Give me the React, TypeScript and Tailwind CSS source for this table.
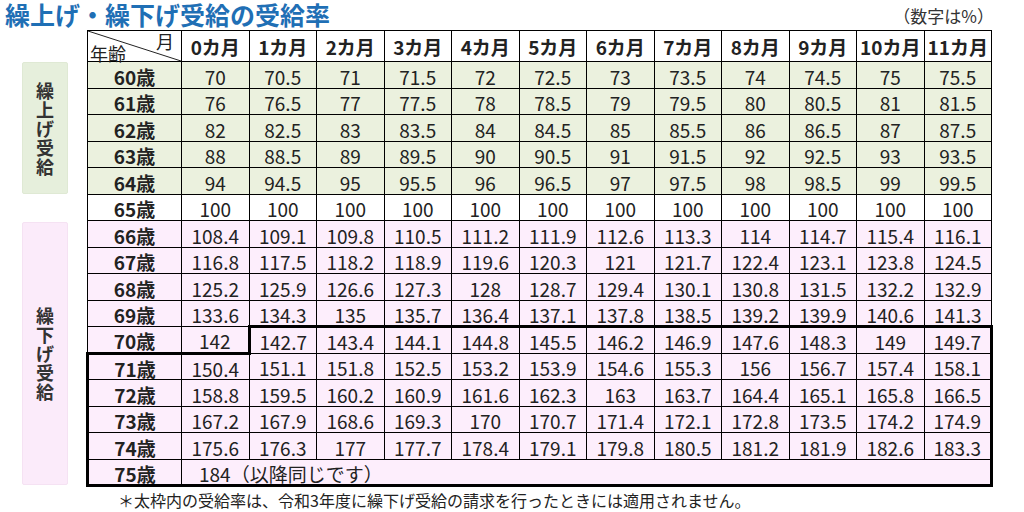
import * as React from "react";

const months = Array.from({ length: 12 }, (_, i) => i);
const ages = [60, 61, 62, 63, 64, 65, 66, 67, 68, 69, 70, 71, 72, 73, 74];

function rate(age: number, m: number): string {
  let v = 100;
  if (age < 65) v = 70 + (age - 60) * 6 + m * 0.5;
  else if (age > 65) v = 100 + ((age - 65) * 12 + m) * 0.7;
  return String(Math.round(v * 10) / 10);
}

function rowBg(age: number) {
  if (age < 65) return "bg-[#ebf1de]";
  if (age === 65) return "bg-white";
  return "bg-[#fdeefc]";
}

const pick = (c: boolean, a: string, b: string) => (c ? a : b);

export default function App() {
  return (
    <div
      className="w-[1024px] h-[512px] bg-white overflow-hidden text-[#222]"
      style={{ fontFamily: '"Noto Sans CJK JP", "Noto Sans", sans-serif' }}
    >
      <div className="flex h-[30px] items-start justify-between pl-[5px] pr-[30px]">
        <h1 className="text-[25px] font-bold leading-[29px] text-[#1f6fb5]">
          繰上げ・繰下げ受給の受給率
        </h1>
        <span className="pt-[7px] text-[17px] leading-none text-[#333]">（数字は%）</span>
      </div>

      <div className="flex pl-[22px]">
        <div className="flex w-[46px] flex-col">
          <div className="mt-[32px] flex h-[132px] items-center justify-center rounded-[2px] border border-[#dfe9d4] bg-[#e6efdc]">
            <div className="w-[18px] text-[18px] font-bold leading-[19px] text-[#333]">
              繰上げ受給
            </div>
          </div>
          <div className="mt-[28px] flex h-[263px] items-center justify-center rounded-[2px] border border-[#f5e2f3] bg-[#fbebfa]">
            <div className="w-[18px] text-[18px] font-bold leading-[19px] text-[#333]">
              繰下げ受給
            </div>
          </div>
        </div>

        <div className="ml-[18px] flex flex-col">
          <table className="w-[907px] table-fixed border-collapse">
            <colgroup>
              <col className="w-[94px]" />
              {months.map((m) => (
                <col key={m} />
              ))}
            </colgroup>
            <thead>
              <tr className="h-[31px] bg-white">
                <th className="relative border border-black p-0">
                  <svg className="absolute inset-0 h-full w-full" preserveAspectRatio="none" viewBox="0 0 100 100">
                    <line x1="0" y1="0" x2="100" y2="100" stroke="#222" strokeWidth="1" vectorEffect="non-scaling-stroke" />
                  </svg>
                  <span className="absolute right-[7px] top-[1px] text-[18px] font-normal leading-none">月</span>
                  <span className="absolute bottom-[-1px] left-[2px] text-[18px] font-normal leading-none">年齢</span>
                </th>
                {months.map((m) => (
                  <th key={m} className="border border-black p-0 text-center text-[19px] font-bold leading-none">
                    {m}カ月
                  </th>
                ))}
              </tr>
            </thead>
            <tbody>
              {ages.map((age) => (
                <tr key={age} className={`h-[26.5px] ${rowBg(age)}`}>
                  <td
                    className={`border-r border-black p-0 pt-[3px] text-center text-[19px] font-bold leading-none ${pick(
                      age >= 71,
                      "border-l-[3px]",
                      "border-l"
                    )} ${pick(age === 71, "border-t-[3px]", "border-t")} border-b`}
                  >
                    {age}歳
                  </td>
                  {months.map((m) => (
                    <td
                      key={m}
                      className={`border-b border-black p-0 pt-[3px] text-center text-[19px] leading-none ${pick(
                        (age === 70 && m >= 1) || (age === 71 && m === 0),
                        "border-t-[3px]",
                        "border-t"
                      )} ${pick(age === 70 && m === 1, "border-l-[3px]", "border-l")} ${pick(
                        m === 11 && age >= 70,
                        "border-r-[3px]",
                        "border-r"
                      )}`}
                    >
                      {rate(age, m)}
                    </td>
                  ))}
                </tr>
              ))}
              <tr className="h-[26.5px] bg-[#fdeefc]">
                <td className="border-t border-r border-l-[3px] border-b-[3px] border-black p-0 pt-[3px] text-center text-[19px] font-bold leading-none">
                  75歳
                </td>
                <td
                  colSpan={12}
                  className="border-t border-l border-r-[3px] border-b-[3px] border-black p-0 pl-[17px] pt-[3px] text-left text-[19px] leading-none"
                >
                  184（以降同じです）
                </td>
              </tr>
            </tbody>
          </table>
          <p className="mt-[5px] pl-[32px] text-[16px] leading-none text-[#222]">
            ＊太枠内の受給率は、令和3年度に繰下げ受給の請求を行ったときには適用されません。
          </p>
        </div>
      </div>
    </div>
  );
}
